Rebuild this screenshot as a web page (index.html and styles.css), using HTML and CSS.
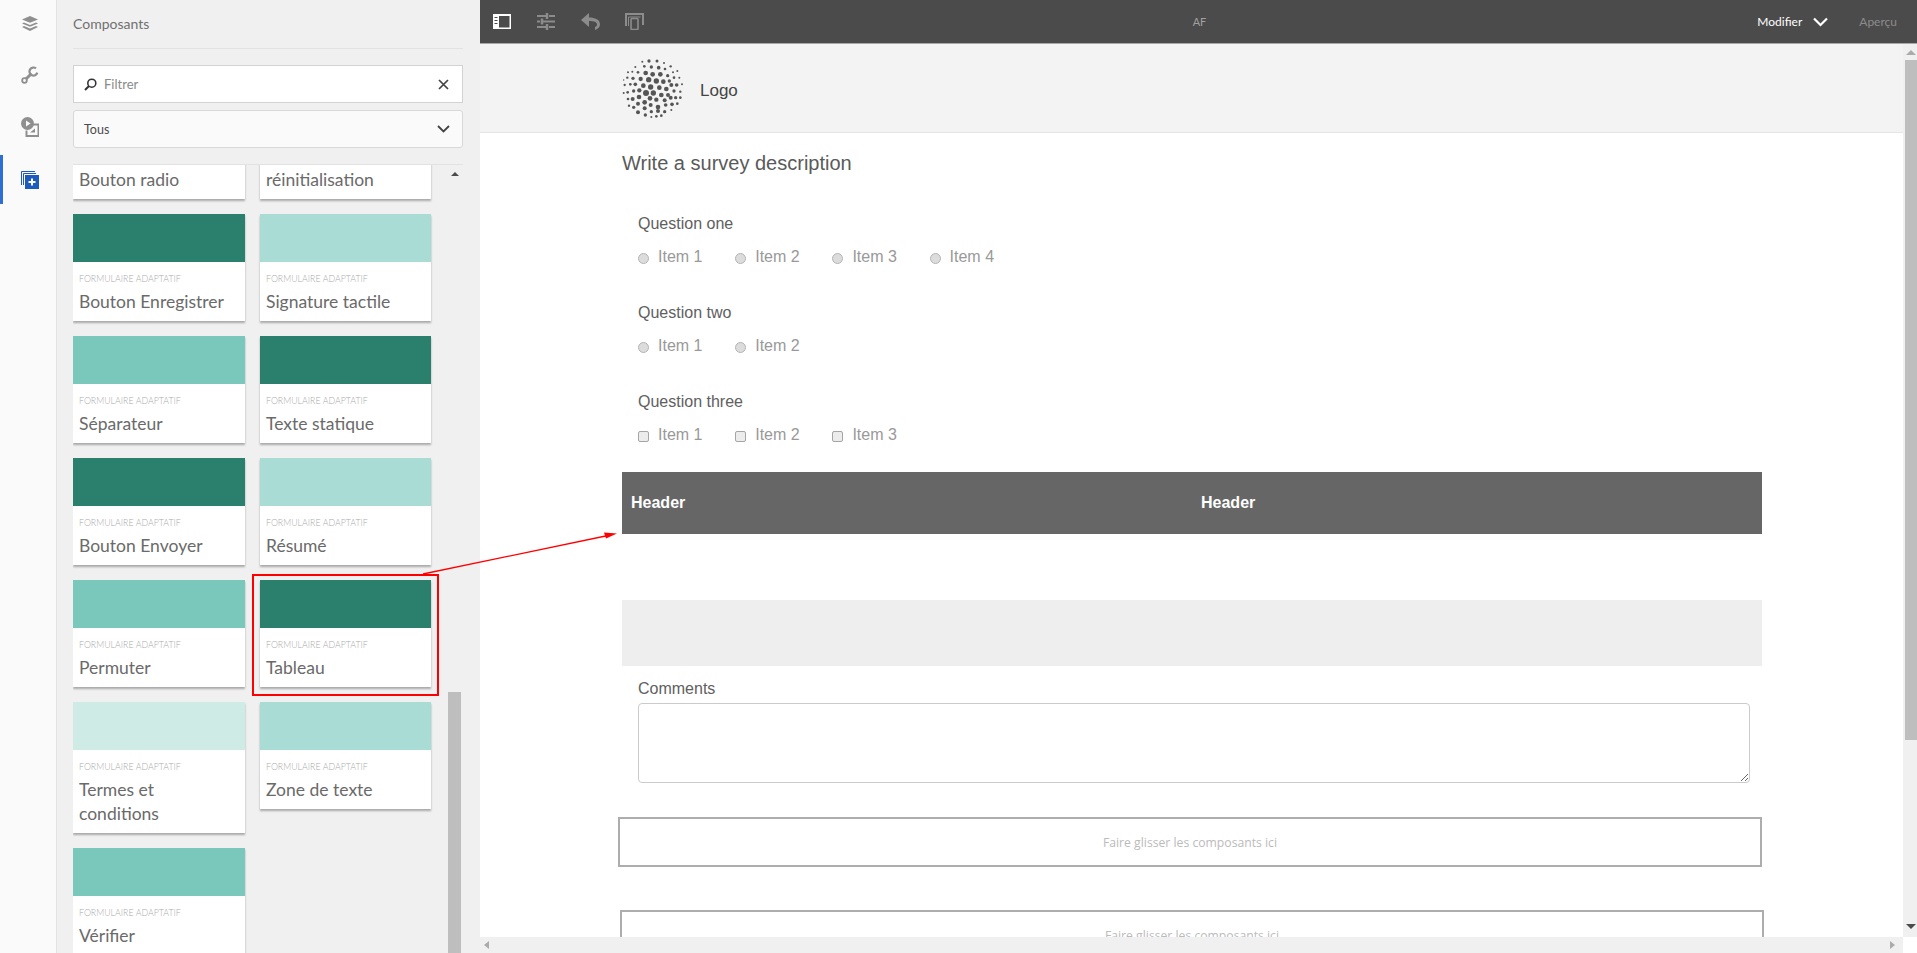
FILE: index.html
```html
<!DOCTYPE html>
<html lang="fr">
<head>
    <meta charset="UTF-8">
    <title>AF</title>
    <link rel="stylesheet" href="styles.css">
</head>
<body>

<nav class="rail">
    <svg class="rail-icon" width="18" height="18" viewBox="0 0 18 18"><path d="M9 1l8 3.4-8 3.4-8-3.4z" fill="#8f8f8f"/><path d="M3 7.4l6 2.6 6-2.6 2 1-8 3.4-8-3.4z" fill="#8f8f8f"/><path d="M3 11l6 2.6 6-2.6 2 1-8 4-8-4z" fill="#8f8f8f"/></svg>
    <svg class="rail-icon" width="18" height="18" viewBox="0 0 18 18"><path d="M5 13L10.500 7.500" stroke="#8f8f8f" stroke-width="3" fill="none"/><circle cx="3.500" cy="14.500" r="2.300" fill="none" stroke="#8f8f8f" stroke-width="1.800"/><path d="M15 2.400A4 4 0 1 0 16.300 6.700" fill="none" stroke="#8f8f8f" stroke-width="2.200"/></svg>
    <svg class="rail-icon" width="18" height="20" viewBox="0 0 18 20"><circle cx="6.500" cy="6.500" r="6.500" fill="#8f8f8f"/><path d="M5 3.500l4.500 3-4.500 3z" fill="#fafafa"/><path d="M12 7.500h5.500v11.500h-12v-5.500" fill="none" stroke="#8f8f8f" stroke-width="2"/><path d="M9 15.500h5v-4z" fill="#8f8f8f"/></svg>
    <div class="rail-active">
        <svg width="18" height="18" viewBox="0 0 18 18"><path d="M.5 14V.5H14" fill="none" stroke="#1d5bbf"/><path d="M2.500 14V2.500H15" fill="none" stroke="#1d5bbf"/><rect x="4" y="4" width="14" height="14" fill="#1d5bbf"/><path d="M10 7.500h2v2.500h2.500v2H12v2.500h-2V12H7.500v-2H10z" fill="#fff"/></svg>
    </div>
</nav>

<aside class="panel">
    <div class="panel-title">Composants</div>
    <div class="filter">
        <svg width="13" height="13" viewBox="0 0 13 13"><circle cx="7.800" cy="5.200" r="4" fill="none" stroke="#333" stroke-width="1.600"/><path d="M5 8l-4 4" stroke="#333" stroke-width="2"/></svg>
        <span class="filter-text">Filtrer</span>
        <svg width="11" height="11" viewBox="0 0 11 11"><path d="M1 1l9 9M10 1l-9 9" stroke="#444" stroke-width="1.700"/></svg>
    </div>
    <div class="select">
        <span>Tous</span>
        <svg width="13" height="8" viewBox="0 0 13 8"><path d="M1 1l5.500 5.500L12 1" fill="none" stroke="#444" stroke-width="1.800"/></svg>
    </div>
    <div class="list-wrap">
        <div class="cards">
            <div class="card first"><div class="swatch mid"></div><div class="card-body"><div class="card-type">FORMULAIRE ADAPTATIF</div><div class="card-title">Bouton radio</div></div></div>
            <div class="card first"><div class="swatch pale"></div><div class="card-body"><div class="card-type">FORMULAIRE ADAPTATIF</div><div class="card-title">Bouton de<br>réinitialisation</div></div></div>

            <div class="card"><div class="swatch dark"></div><div class="card-body"><div class="card-type">FORMULAIRE ADAPTATIF</div><div class="card-title">Bouton Enregistrer</div></div></div>
            <div class="card"><div class="swatch pale"></div><div class="card-body"><div class="card-type">FORMULAIRE ADAPTATIF</div><div class="card-title">Signature tactile</div></div></div>

            <div class="card"><div class="swatch mid"></div><div class="card-body"><div class="card-type">FORMULAIRE ADAPTATIF</div><div class="card-title">Séparateur</div></div></div>
            <div class="card"><div class="swatch dark"></div><div class="card-body"><div class="card-type">FORMULAIRE ADAPTATIF</div><div class="card-title">Texte statique</div></div></div>

            <div class="card"><div class="swatch dark"></div><div class="card-body"><div class="card-type">FORMULAIRE ADAPTATIF</div><div class="card-title">Bouton Envoyer</div></div></div>
            <div class="card"><div class="swatch pale"></div><div class="card-body"><div class="card-type">FORMULAIRE ADAPTATIF</div><div class="card-title">Résumé</div></div></div>

            <div class="card"><div class="swatch mid"></div><div class="card-body"><div class="card-type">FORMULAIRE ADAPTATIF</div><div class="card-title">Permuter</div></div></div>
            <div class="card"><div class="swatch dark"></div><div class="card-body"><div class="card-type">FORMULAIRE ADAPTATIF</div><div class="card-title">Tableau</div></div></div>

            <div class="card"><div class="swatch light"></div><div class="card-body"><div class="card-type">FORMULAIRE ADAPTATIF</div><div class="card-title">Termes et<br>conditions</div></div></div>
            <div class="card"><div class="swatch pale"></div><div class="card-body"><div class="card-type">FORMULAIRE ADAPTATIF</div><div class="card-title">Zone de texte</div></div></div>

            <div class="card"><div class="swatch mid"></div><div class="card-body"><div class="card-type">FORMULAIRE ADAPTATIF</div><div class="card-title">Vérifier</div></div></div>
        </div>
        <div class="list-scroll">
            <span class="tri-up"></span>
            <div class="list-thumb"></div>
        </div>
    </div>
</aside>

<main class="main">
    <header class="toolbar">
        <div class="tools">
            <svg width="18" height="15" viewBox="0 0 18 15"><rect width="18" height="15" fill="#fff"/><rect x="6" y="2" width="10.500" height="11.500" fill="#4b4b4b"/><path d="M1.500 3.500h3M1.500 6.500h3M1.500 9.500h3" stroke="#4b4b4b"/></svg>
            <svg width="18" height="17" viewBox="0 0 18 17"><path d="M0 3h9M12 3h6M0 8.500h3M6 8.500h12M0 14h9M12 14h6" stroke="#8c8c8c" stroke-width="2"/><path d="M10 0v6M5 5.500v6M10 11v6" stroke="#8c8c8c" stroke-width="2.500"/></svg>
            <svg width="19" height="17" viewBox="0 0 19 17"><path d="M0 7l8-7v4.500c6 0 11 2 11 7 0 2.500-2 4.500-5 5.500v-3c1.500-.5 2-1.500 2-2.500 0-2.500-3-3.500-8-3.500V14z" fill="#8c8c8c"/></svg>
            <svg class="tool-device" width="19" height="17" viewBox="0 0 19 17"><path d="M1 13V1h17v11" fill="none" stroke="#8c8c8c" stroke-width="2"/><path d="M3.500 13V4h12" fill="none" stroke="#8c8c8c"/><rect x="6" y="5.500" width="7" height="11" rx="1" fill="#4b4b4b" stroke="#8c8c8c" stroke-width="1.600"/></svg>
        </div>
        <div class="doc-name">AF</div>
        <div class="mode">
            <span class="mode-edit">Modifier</span>
            <svg width="15" height="10" viewBox="0 0 15 10"><path d="M1 1.500l6.500 6.500L14 1.500" fill="none" stroke="#fff" stroke-width="2.200"/></svg>
            <span class="mode-preview">Aperçu</span>
        </div>
    </header>

    <div class="viewport">
        <div class="canvas">
            <div class="logo-bar">
                <svg class="logo" width="70" height="68" viewBox="0 0 210 204" fill="#555">
                    <circle cx="73" cy="20" r="3"/><circle cx="93" cy="18" r="5"/><circle cx="117" cy="18" r="4.500"/><circle cx="138" cy="24" r="3"/>
                    <circle cx="52" cy="36" r="3"/><circle cx="79" cy="34" r="4"/><circle cx="100" cy="36" r="5"/><circle cx="122" cy="38" r="5.500"/><circle cx="141" cy="42" r="4"/><circle cx="158" cy="34" r="3.500"/>
                    <circle cx="30" cy="52" r="3"/><circle cx="43" cy="50" r="3"/><circle cx="60" cy="52" r="4"/><circle cx="83" cy="54" r="7"/><circle cx="104" cy="58" r="7"/><circle cx="127" cy="58" r="7"/><circle cx="149" cy="62" r="5"/><circle cx="165" cy="52" r="3"/><circle cx="178" cy="48" r="3"/>
                    <circle cx="17" cy="75" r="2"/><circle cx="28" cy="68" r="3.500"/><circle cx="45" cy="70" r="5"/><circle cx="68" cy="72" r="6.500"/><circle cx="92" cy="74" r="8"/><circle cx="115" cy="78" r="8"/><circle cx="136" cy="80" r="7"/><circle cx="154" cy="78" r="5"/><circle cx="168" cy="68" r="4"/><circle cx="184" cy="68" r="3"/>
                    <circle cx="20" cy="90" r="3.500"/><circle cx="37" cy="88" r="4"/><circle cx="52" cy="88" r="5.500"/><circle cx="76" cy="92" r="7"/><circle cx="98" cy="96" r="8"/><circle cx="124" cy="98" r="7"/><circle cx="145" cy="102" r="7"/><circle cx="160" cy="90" r="6"/><circle cx="176" cy="90" r="5.500"/><circle cx="192" cy="88" r="3"/>
                    <circle cx="17" cy="114" r="3"/><circle cx="29" cy="112" r="4"/><circle cx="47" cy="108" r="5"/><circle cx="64" cy="106" r="6.500"/><circle cx="84" cy="114" r="9"/><circle cx="106" cy="114" r="8"/><circle cx="130" cy="120" r="7"/><circle cx="150" cy="120" r="6"/><circle cx="168" cy="108" r="5"/><circle cx="187" cy="110" r="3.500"/>
                    <circle cx="30" cy="132" r="4"/><circle cx="44" cy="132" r="6"/><circle cx="63" cy="126" r="7"/><circle cx="96" cy="130" r="7"/><circle cx="115" cy="134" r="6.500"/><circle cx="140" cy="136" r="6"/><circle cx="158" cy="128" r="6"/><circle cx="173" cy="128" r="5"/><circle cx="187" cy="128" r="4"/>
                    <circle cx="33" cy="152" r="3.500"/><circle cx="47" cy="157" r="5"/><circle cx="60" cy="146" r="6"/><circle cx="80" cy="142" r="7"/><circle cx="98" cy="150" r="6"/><circle cx="120" cy="156" r="7"/><circle cx="143" cy="150" r="5.500"/><circle cx="162" cy="148" r="5.500"/><circle cx="178" cy="146" r="4"/>
                    <circle cx="60" cy="172" r="6"/><circle cx="80" cy="160" r="6"/><circle cx="82" cy="180" r="5"/><circle cx="100" cy="170" r="5"/><circle cx="120" cy="168" r="6"/><circle cx="140" cy="170" r="5"/><circle cx="160" cy="165" r="3"/><circle cx="100" cy="186" r="3"/><circle cx="115" cy="184" r="4"/><circle cx="130" cy="182" r="4"/>
                </svg>
                <span class="logo-text">Logo</span>
            </div>

            <div class="form">
                <h1 class="description">Write a survey description</h1>

                <div class="question">
                    <div class="q-label">Question one</div>
                    <div class="options">
                        <label class="option"><input type="radio" name="q1">Item 1</label>
                        <label class="option"><input type="radio" name="q1">Item 2</label>
                        <label class="option"><input type="radio" name="q1">Item 3</label>
                        <label class="option"><input type="radio" name="q1">Item 4</label>
                    </div>
                </div>
                <div class="question">
                    <div class="q-label">Question two</div>
                    <div class="options">
                        <label class="option"><input type="radio" name="q2">Item 1</label>
                        <label class="option"><input type="radio" name="q2">Item 2</label>
                    </div>
                </div>
                <div class="question">
                    <div class="q-label">Question three</div>
                    <div class="options">
                        <label class="option"><input type="checkbox">Item 1</label>
                        <label class="option"><input type="checkbox">Item 2</label>
                        <label class="option"><input type="checkbox">Item 3</label>
                    </div>
                </div>

                <div class="table-head">
                    <div>Header</div>
                    <div>Header</div>
                </div>
                <div class="table-row"></div>
                <div class="band"></div>

                <div class="comments">
                    <label class="comment-label">Comments</label>
                    <textarea class="comment-box"></textarea>
                </div>

                <div class="dropzone one">Faire glisser les composants ici</div>
                <div class="dropzone two">Faire glisser les composants ici</div>
            </div>
        </div>
        <div class="vscroll">
            <span class="tri-up light"></span>
            <div class="vthumb"></div>
            <span class="tri-down"></span>
        </div>
        <div class="hscroll">
            <span class="tri-left"></span>
            <span class="tri-right"></span>
        </div>
        <div class="corner"></div>
    </div>
</main>

<!-- annotation over the screenshot -->
<div class="callout"></div>
<svg class="callout-arrow" width="1917" height="953" viewBox="0 0 1917 953">
    <path d="M423 574L608 535.500" stroke="#f00" stroke-width="1.300" fill="none"/>
    <path d="M617 533.500L604 532.500 606 538.500z" fill="#f00"/>
</svg>

</body>
</html>
```

FILE: styles.css
```css
* {
    box-sizing: border-box;
}
html, body {
    height: 100%;
}
body {
    margin: 0;
    display: flex;
    height: 953px;
    overflow: hidden;
    font-family: "Liberation Sans", Arial, sans-serif;
    background-color: #fff;
}

/* left rail */
.rail {
    width: 57px;
    flex: none;
    background: #fafafa;
    border-right: 1px solid #e2e2e2;
    display: flex;
    flex-direction: column;
    align-items: center;
    padding-top: 15px;
}
.rail-icon {
    display: block;
    margin-left: 4px;
    margin-bottom: 33px;
}
.rail-active {
    width: 56px;
    height: 49px;
    margin-top: -15px;
    border-left: 3px solid #2d6fd2;
    display: flex;
    align-items: center;
    padding-left: 18px;
}

/* components panel */
.panel {
    width: 423px;
    flex: none;
    background: #f0f0f0;
    padding: 0 17px 0 16px;
    display: flex;
    flex-direction: column;
    font-family: Lato, sans-serif;
}
.panel-title {
    height: 49px;
    line-height: 48px;
    flex: none;
    font-size: 14px;
    color: #707070;
    border-bottom: 1px solid #e2e2e2;
}
.filter {
    height: 38px;
    flex: none;
    margin-top: 16px;
    background: #fff;
    border: 1px solid #d2d2d2;
    display: flex;
    align-items: center;
    padding: 0 13px 0 10px;
}
.filter-text {
    flex: 1;
    margin-left: 7px;
    font-size: 13px;
    color: #8a8a8a;
}
.select {
    height: 38px;
    flex: none;
    margin-top: 7px;
    background: #fafafa;
    border: 1px solid #d8d8d8;
    border-radius: 3px;
    display: flex;
    align-items: center;
    justify-content: space-between;
    padding: 0 12px 0 10px;
    font-size: 12.500px;
    color: #4b4b4b;
}
.list-wrap {
    flex: 1;
    min-height: 0;
    margin-top: 16px;
    border-top: 1px solid #e2e2e2;
    display: flex;
    overflow: hidden;
}
.cards {
    width: 358px;
    flex: none;
    margin-top: -97px;
    display: grid;
    grid-template-columns: 172px 171px;
    column-gap: 15px;
    row-gap: 15px;
    align-items: start;
    align-content: start;
}
.card {
    background: #fff;
    box-shadow: 0 2px 2px rgba(0, 0, 0, 0.3);
}
.card.first {
    align-self: end;
}
.swatch {
    height: 48px;
}
.swatch.dark { background: #2a806c; }
.swatch.mid { background: #7ac8bb; }
.swatch.pale { background: #aadcd6; }
.swatch.light { background: #ceebe6; }
.card-body {
    padding: 11px 6px 7px;
}
.card-type {
    font-size: 8.800px;
    line-height: 12px;
    font-weight: 300;
    color: #aaa;
    white-space: nowrap;
}
.card-title {
    margin-top: 5px;
    font-size: 17.500px;
    line-height: 24px;
    color: #6a6a6a;
    white-space: nowrap;
}
.list-scroll {
    width: 13px;
    flex: none;
    margin-left: 17px;
    display: flex;
    flex-direction: column;
    align-items: center;
    padding-top: 7px;
}
.list-thumb {
    width: 13px;
    height: 261px;
    margin-top: auto;
    background: #bebebe;
}

/* scrollbar arrows */
.tri-up, .tri-down, .tri-left, .tri-right {
    display: block;
    width: 0;
    height: 0;
    flex: none;
    border-style: solid;
    border-color: transparent;
}
.tri-up {
    border-width: 0 4px 4px;
    border-bottom-color: #4b4b4b;
}
.tri-up.light {
    border-width: 0 5px 5px;
    border-bottom-color: #ababab;
}
.tri-down {
    border-width: 5px 5px 0;
    border-top-color: #4b4b4b;
}
.tri-left {
    border-width: 4px 5px 4px 0;
    border-right-color: #ababab;
}
.tri-right {
    border-width: 4px 0 4px 5px;
    border-left-color: #ababab;
}

/* main area */
.main {
    flex: 1;
    min-width: 0;
    display: flex;
    flex-direction: column;
}
.toolbar {
    height: 44px;
    flex: none;
    background: #4b4b4b;
    border-bottom: 1px solid #a8a8a8;
    display: grid;
    grid-template-columns: 1fr auto 1fr;
    align-items: center;
}
.tools {
    display: flex;
    align-items: center;
    gap: 26px;
    padding-left: 13px;
}
.tool-device {
    margin-left: -1px;
}
.doc-name {
    padding-left: 2px;
    font-family: Lato, sans-serif;
    font-size: 11px;
    color: #a0a0a0;
}
.mode {
    display: flex;
    align-items: center;
    justify-content: flex-end;
    padding-right: 20px;
    font-family: Lato, sans-serif;
    font-size: 12px;
}
.mode-edit {
    color: #fff;
    margin-right: 11px;
}
.mode-preview {
    color: #8c8c8c;
    margin-left: 31px;
}
.viewport {
    flex: 1;
    min-height: 0;
    display: grid;
    grid-template-columns: 1423px 14px;
    grid-template-rows: 893px 16px;
}
.canvas {
    grid-column: 1;
    grid-row: 1;
    overflow: hidden;
    background: #fff;
}
.logo-bar {
    height: 89px;
    background: #f3f3f3;
    border-bottom: 1px solid #e5e5e5;
    display: flex;
    align-items: center;
    padding-left: 138px;
}
.logo {
    display: block;
    margin-top: 1px;
}
.logo-text {
    margin: 6px 0 0 12px;
    font-size: 17px;
    color: #444;
}
.form {
    width: 1282px;
    padding-left: 142px;
    padding-top: 18px;
}
.description {
    margin: 0 0 38px;
    font-size: 20px;
    font-weight: normal;
    line-height: 24px;
    color: #5a5a5a;
}
.question {
    padding-left: 16px;
    margin-bottom: 35px;
}
.q-label {
    padding-top: 1px;
    font-size: 16px;
    line-height: 20px;
    color: #606060;
}
.options {
    display: flex;
    margin-top: 13px;
}
.option {
    width: 97.200px;
    display: flex;
    align-items: center;
    gap: 9px;
    font-size: 16px;
    line-height: 20px;
    color: #999;
}
.option input {
    appearance: none;
    width: 11px;
    height: 11px;
    margin: 3px 0 0;
    background: #dcdcdc;
    border: 1px solid #b4b4b4;
    border-radius: 50%;
}
.option input[type="checkbox"] {
    border-radius: 2px;
    margin-top: 2px;
    background: #ececec;
    border-color: #a5a5a5;
}
.table-head {
    display: grid;
    grid-template-columns: 570px 1fr;
    margin-top: -8px;
    height: 62px;
    line-height: 62px;
    padding-left: 9px;
    background: #666;
    color: #fff;
    font-size: 16px;
    font-weight: bold;
}
.table-row {
    height: 66px;
}
.band {
    height: 66px;
    background: #eee;
}
.comments {
    padding: 13px 12px 0 16px;
}
.comment-label {
    display: block;
    font-size: 16px;
    line-height: 20px;
    color: #606060;
}
.comment-box {
    display: block;
    width: 1112px;
    height: 80px;
    margin-top: 4px;
    background: #fff;
    border: 1px solid #cbcbcb;
    border-radius: 4px;
}
.dropzone {
    background: #fff;
    border: 2px solid #adadad;
    text-align: center;
    font-family: "Open Sans", sans-serif;
    font-size: 12.200px;
    color: #bbb;
    height: 50px;
    line-height: 47px;
}
.dropzone.one {
    width: 1144px;
    margin: 34px 0 0 -4px;
}
.dropzone.two {
    width: 1144px;
    margin: 43px 0 0 -2px;
}

/* scrollbars */
.vscroll {
    grid-column: 2;
    grid-row: 1;
    background: #f0f0f0;
    padding: 6px 0 8px 2px;
    display: flex;
    flex-direction: column;
    align-items: center;
}
.vthumb {
    width: 12px;
    height: 680px;
    margin-top: 5px;
    background: #bebebe;
}
.vscroll .tri-down {
    margin-top: auto;
}
.hscroll {
    grid-column: 1;
    grid-row: 2;
    background: #f0f0f0;
    display: flex;
    align-items: center;
    justify-content: space-between;
    padding: 0 8px 0 4px;
}
.corner {
    grid-column: 2;
    grid-row: 2;
    background: #fff;
}

/* red annotation */
.callout {
    position: absolute;
    left: 252px;
    top: 574px;
    width: 187px;
    height: 122px;
    border: 2px solid #f00;
}
.callout-arrow {
    position: absolute;
    left: 0;
    top: 0;
    pointer-events: none;
}
```
